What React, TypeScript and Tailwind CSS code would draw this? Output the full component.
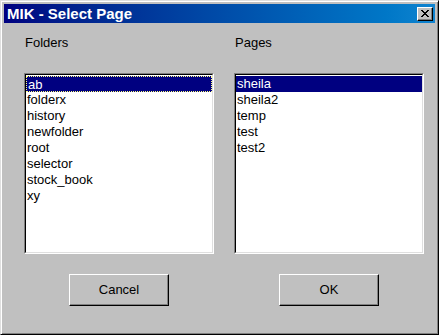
import React from "react";

const folders = ["ab", "folderx", "history", "newfolder", "root", "selector", "stock_book", "xy"];
const pages = ["sheila", "sheila2", "temp", "test", "test2"];

function ListBox({ items, selected, focused }: { items: string[]; selected: number; focused?: boolean }) {
  return (
    <div className="h-[181px] w-[190px] border border-t-[#808080] border-l-[#808080] border-r-white border-b-white">
      <div className="h-full w-full border border-t-black border-l-black border-r-[#dfdfdf] border-b-[#dfdfdf] bg-white pt-px">
        {items.map((it, i) => (
          <div
            key={it}
            className={
              "h-[16px] pl-[1px] text-[13px] leading-[16px] " +
              (i === selected
                ? "bg-[#000080] text-white " + (focused ? "border border-dotted border-[#ffff80] pl-0 leading-[14px]" : "")
                : "text-black")
            }
          >
            {it}
          </div>
        ))}
      </div>
    </div>
  );
}

function Button({ label }: { label: string }) {
  return (
    <div className="h-[32px] w-[100px] border border-t-white border-l-white border-r-black border-b-black bg-[#c0c0c0] shadow-[inset_-1px_-1px_0_#808080] flex items-center justify-center text-[13px] text-black">
      {label}
    </div>
  );
}

export default function App() {
  return (
    <div
      className="w-[439px] h-[335px] bg-[#c0c0c0] border border-t-[#dfdfdf] border-l-[#dfdfdf] border-r-black border-b-black shadow-[inset_1px_1px_0_#ffffff,inset_-1px_-1px_0_#808080] p-[3px] flex flex-col"
      style={{ fontFamily: '"Liberation Sans", Arial, sans-serif' }}
    >
      <div className="h-[19px] bg-linear-to-r from-[#000080] to-[#1084d0] flex items-center justify-between pl-[3px] pr-[2px]">
        <span className="text-white font-bold text-[15px] leading-[19px]">MIK - Select Page</span>
        <div className="w-[16px] h-[14px] bg-[#c0c0c0] border border-t-white border-l-white border-r-black border-b-black shadow-[inset_-1px_-1px_0_#808080] flex items-center justify-center">
          <svg width="8" height="7" viewBox="0 0 8 7" shapeRendering="crispEdges">
            <path d="M0 0h2v1h-2zM6 0h2v1h-2zM1 1h2v1h-2zM5 1h2v1h-2zM2 2h4v1h-4zM3 3h2v1h-2zM2 4h4v1h-4zM1 5h2v1h-2zM5 5h2v1h-2zM0 6h2v1h-2zM6 6h2v1h-2z" fill="#000" />
          </svg>
        </div>
      </div>
      <div className="flex gap-[20px] pl-[20px]">
        <div className="flex flex-col w-[190px]">
          <div className="mt-[12px] pl-px text-[13px] leading-[15px] text-black">Folders</div>
          <div className="mt-[23px]">
            <ListBox items={folders} selected={0} focused />
          </div>
          <div className="mt-[20px] flex justify-center">
            <Button label="Cancel" />
          </div>
        </div>
        <div className="flex flex-col w-[190px]">
          <div className="mt-[12px] pl-px text-[13px] leading-[15px] text-black">Pages</div>
          <div className="mt-[23px]">
            <ListBox items={pages} selected={0} />
          </div>
          <div className="mt-[20px] flex justify-center">
            <Button label="OK" />
          </div>
        </div>
      </div>
    </div>
  );
}
